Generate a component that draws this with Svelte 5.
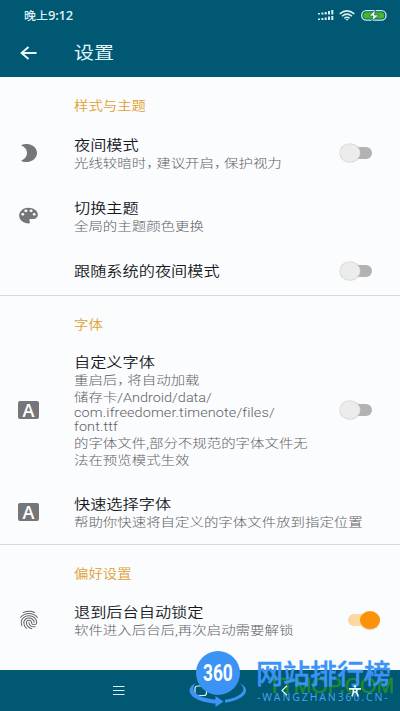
<script>
  let groups = $state([
    {
      title: "样式与主题",
      items: [
        { icon: "moon", title: "夜间模式", lines: ["光线较暗时，建议开启，保护视力"], on: false },
        { icon: "palette", title: "切换主题", lines: ["全局的主题颜色更换"] },
        { title: "跟随系统的夜间模式", lines: [], on: false },
      ],
    },
    {
      title: "字体",
      items: [
        {
          icon: "font",
          title: "自定义字体",
          lines: [
            "重启后，将自动加载",
            "储存卡/Android/data/",
            "com.ifreedomer.timenote/files/",
            "font.ttf",
            "的字体文件,部分不规范的字体文件无",
            "法在预览模式生效",
          ],
          on: false,
        },
        { icon: "font", title: "快速选择字体", lines: ["帮助你快速将自定义的字体文件放到指定位置"] },
      ],
    },
    {
      title: "偏好设置",
      items: [
        { icon: "finger", title: "退到后台自动锁定", lines: ["软件进入后台后,再次启动需要解锁"], on: true },
      ],
    },
  ]);

  const isLatin = (s) => /^[\x20-\x7e]+$/.test(s);
</script>

<div class="screen">
  <header>
    <div class="status">
      <span class="clock">晚上<span class="digits">9:12</span></span>
      <svg class="signal" width="16" height="11" viewBox="0 0 16 11" fill="#d5f3f5">
        <path d="M0 3h2v1.500H0zM3.400 2.500h2v2h-2zM6.700 2h2v2.500h-2zM10 1h2v3.500h-2zM13.300 0h2v4.500h-2zM0 8.500h2V10H0zM3.400 8h2v2h-2zM6.700 7.500h2V10h-2zM10 6.500h2V10h-2zM13.300 6h2v4h-2z" />
      </svg>
      <svg class="wifi" width="16" height="11" viewBox="0 0 16 11" fill="none" stroke="#d5f3f5" stroke-width="1.500">
        <path d="M.7 3.900Q8-2.200 15.300 3.900M3 6.200Q8 2 13 6.200M5.400 8.300Q8 6.200 10.600 8.300" />
        <path d="M6.500 9h3L8 10.700z" fill="#d5f3f5" stroke="none" />
      </svg>
      <svg class="battery" width="26" height="11" viewBox="0 0 26 11">
        <rect x=".7" y=".7" width="24.300" height="9.400" rx="4.700" fill="#075467" stroke="#c9eeee" stroke-width="1.300" />
        <rect x="2.300" y="2.200" width="21" height="6.400" rx="3.200" fill="#43b82f" />
        <path d="M14.500 0 8 6h4l-1.200 5L18 5h-4.500z" fill="#fff" stroke="#0b6251" stroke-width=".7" />
      </svg>
    </div>
    <div class="toolbar">
      <svg width="17" height="14" viewBox="0 0 17 14" fill="none" stroke="#e9fbfc" stroke-width="1.900">
        <path d="M16.500 7H1.500M8.500 1 1.600 7l6.900 6" />
      </svg>
      <h1>设置</h1>
    </div>
  </header>

  <main>
    {#each groups as group}
      <section>
        <h2>{group.title}</h2>
        {#each group.items as item}
          <div class="row" class:single={!item.lines.length}>
            <div class="icon">
              {#if item.icon === "moon"}
                <svg width="16" height="18" viewBox="0 0 16 18" fill="#757679">
                  <path d="M0 1.300C2-.1 5-.3 8 .3c4.700 1.100 8 4.500 8 8.600 0 4.200-3.300 7.700-8 8.800-3 .6-6 .4-8-1C4 15 6 12.300 6 9S4 3 0 1.300z" />
                </svg>
              {:else if item.icon === "palette"}
                <svg width="25" height="21" viewBox="0 0 24 24" preserveAspectRatio="none" fill="#757679">
                  <path d="M12 3c-4.970 0-9 4.030-9 9s4.030 9 9 9c.83 0 1.500-.67 1.500-1.500 0-.39-.15-.74-.39-1.010-.23-.26-.38-.61-.38-.99 0-.83.67-1.500 1.500-1.500H16c2.760 0 5-2.240 5-5 0-4.420-4.030-8-9-8zm-5.500 9c-.83 0-1.500-.67-1.500-1.500S5.670 9 6.500 9 8 9.670 8 10.500 7.330 12 6.500 12zm3-4C8.670 8 8 7.330 8 6.500S8.670 5 9.500 5s1.500.67 1.500 1.500S10.330 8 9.500 8zm5 0c-.83 0-1.500-.67-1.500-1.500S13.670 5 14.500 5s1.500.67 1.500 1.500S15.330 8 14.500 8zm3 4c-.83 0-1.500-.67-1.500-1.500S16.670 9 17.500 9s1.500.67 1.500 1.500-.67 1.500-1.500 1.500z" />
                </svg>
              {:else if item.icon === "font"}
                <span class="letter">A</span>
              {:else if item.icon === "finger"}
                <svg width="24" height="22" viewBox="0 0 24 24" preserveAspectRatio="none" fill="#5f6063">
                  <path d="M17.810 4.470c-.08 0-.16-.02-.23-.06C15.660 3.420 14 3 12.010 3c-1.980 0-3.860.47-5.570 1.410-.24.13-.54.04-.68-.2-.13-.24-.04-.55.2-.68C7.820 2.520 9.860 2 12.010 2c2.130 0 3.990.47 6.030 1.520.25.13.34.43.21.67-.09.18-.26.28-.44.28zM3.500 9.720c-.1 0-.2-.03-.29-.09-.23-.16-.28-.47-.12-.7.99-1.400 2.250-2.500 3.750-3.270C9.980 4.040 14 4.030 17.150 5.650c1.500.77 2.760 1.860 3.750 3.250.16.22.11.54-.12.7-.23.16-.54.11-.7-.12-.9-1.260-2.040-2.250-3.390-2.940-2.870-1.470-6.540-1.470-9.400.01-1.360.7-2.500 1.700-3.400 2.960-.08.14-.23.21-.39.21zm6.250 12.070c-.13 0-.26-.05-.35-.15-.87-.87-1.340-1.430-2.010-2.640-.69-1.230-1.050-2.730-1.050-4.340 0-2.970 2.540-5.390 5.660-5.390s5.660 2.420 5.660 5.390c0 .28-.22.5-.5.5s-.5-.22-.5-.5c0-2.420-2.090-4.390-4.660-4.390-2.570 0-4.660 1.970-4.660 4.390 0 1.440.32 2.770.93 3.850.64 1.150 1.080 1.640 1.850 2.420.19.2.19.51 0 .71-.11.1-.24.15-.37.15zm7.170-1.850c-1.190 0-2.240-.3-3.100-.89-1.490-1.010-2.380-2.650-2.380-4.390 0-.28.22-.5.5-.5s.5.22.5.5c0 1.410.72 2.740 1.940 3.560.71.48 1.540.71 2.540.71.24 0 .64-.03 1.040-.1.27-.05.53.13.58.41.05.27-.13.53-.41.58-.57.11-1.070.12-1.210.12zM14.910 22c-.04 0-.09-.01-.13-.02-1.590-.44-2.630-1.030-3.720-2.100-1.400-1.390-2.170-3.240-2.170-5.220 0-1.620 1.380-2.940 3.080-2.940 1.700 0 3.080 1.320 3.080 2.940 0 1.070.93 1.940 2.080 1.940s2.080-.87 2.080-1.940c0-3.770-3.250-6.830-7.250-6.830-2.840 0-5.440 1.580-6.610 4.030-.39.81-.59 1.760-.59 2.800 0 .78.07 2.010.67 3.610.1.26-.03.55-.29.64-.26.1-.55-.04-.64-.29-.49-1.310-.73-2.610-.73-3.960 0-1.200.23-2.290.68-3.240 1.330-2.790 4.280-4.600 7.510-4.600 4.550 0 8.250 3.510 8.250 7.830 0 1.620-1.380 2.940-3.080 2.940s-3.080-1.320-3.080-2.940c0-1.070-.93-1.940-2.080-1.940s-2.080.87-2.080 1.940c0 1.710.66 3.310 1.870 4.510.95.94 1.860 1.460 3.270 1.850.27.07.42.35.35.61-.05.23-.26.38-.47.38z" />
                </svg>
              {/if}
            </div>
            <div class="text">
              <p class="title">{item.title}</p>
              {#each item.lines as line}
                <p class="line" class:latin={isLatin(line)}>
                  {#each line.split("，") as part, i}{#if i}<span class="comma">，</span>{/if}{part}{/each}
                </p>
              {/each}
            </div>
            {#if item.on !== undefined}
              <button
                class="switch"
                class:on={item.on}
                role="switch"
                aria-checked={item.on}
                aria-label={item.title}
                onclick={() => (item.on = !item.on)}
              ></button>
            {/if}
          </div>
        {/each}
      </section>
    {/each}
  </main>

  <nav>
    <svg class="menu" width="12" height="11" viewBox="0 0 12 11" stroke="#d9f4f4" stroke-width="1.200">
      <path d="M0 1.500h11.500M0 5.500h11.500M0 9.500h11.500" />
    </svg>
    <svg class="home" width="14" height="12" viewBox="0 0 14 12" fill="none" stroke="#d9f4f4" stroke-width="1.200">
      <rect x="1" y="1" width="11.500" height="9.500" rx="2.500" />
    </svg>
    <svg class="back" width="7" height="11" viewBox="0 0 7 11" fill="none" stroke="#d9f4f4" stroke-width="1.200">
      <path d="M6 .8 1 5.500 6 10.200" />
    </svg>
    <svg class="person" width="14" height="12" viewBox="0 0 14 12" fill="none" stroke="#e6ffff" stroke-width="1.600">
      <circle cx="7" cy="1.500" r="1.300" fill="#e6ffff" stroke="none" />
      <path d="M1 3.900h12M5.300 4v3.500L4 11.500M8.700 4v3.500l1.300 4M5.500 7h3" />
    </svg>
  </nav>

  <div class="mark">
    <svg width="62" height="62" viewBox="0 0 62 62">
      <circle cx="30" cy="24" r="22" fill="#3b93f5" />
      <path d="M7.500 34C-2 39 0 47 12 51.500c5 1.900 10 2.700 15.500 2.900V58l8-5.500-8-5.500v3.600C18 50 7 46.500 5.500 41c-.6-2.500.5-4.800 2-7z" fill="#3b93f5" />
      <path d="M52 34c9 5 8 12-3 16.500-4 1.700-8 2.700-12 3.100v-2.800C46 49.500 54 46 55.300 41c.6-2.500-1.300-4.800-3.300-7z" fill="#3b93f5" />
    </svg>
    <b class="num">360</b>
    <span class="green">TTMOP.COM</span>
    <b class="name">网站排行榜</b>
    <span class="site">-WANGZHAN360.CN-</span>
  </div>
</div>

<style>
  :global(body) {
    margin: 0;
  }

  .screen {
    position: relative;
    width: 400px;
    height: 711px;
    display: flex;
    flex-direction: column;
    overflow: hidden;
    background: #fbfcfe;
    font-family: Roboto, "Noto Sans CJK SC", sans-serif;
  }

  h1, h2, p {
    margin: 0;
    font-weight: 400;
    white-space: nowrap;
  }

  header {
    height: 77px;
    background: #005872;
    flex: none;
  }

  .status {
    height: 30px;
    display: flex;
    align-items: center;
    padding: 0 13px 0 24px;
    box-sizing: border-box;
  }

  .clock {
    font-family: "Open Sans", "Noto Sans CJK SC", sans-serif;
    font-weight: 500;
    font-size: 12px;
    color: #d8f2f5;
    margin-right: auto;
    transform: scaleY(0.92);
  }

  .digits {
    font-size: 13px;
    font-weight: 600;
    letter-spacing: -0.2px;
  }

  .wifi {
    margin: 0 6px 0 5px;
  }

  .toolbar {
    display: flex;
    align-items: center;
    height: 46px;
    padding-left: 20px;
  }

  h1 {
    margin-left: 37px;
    font-size: 20px;
    line-height: 24px;
    color: #e0f5f8;
    transform: scaleY(0.85);
  }

  main {
    flex: 1;
    min-height: 0;
    overflow: hidden;
  }

  section + section {
    border-top: 1px solid #d5d7d9;
  }

  h2 {
    height: 31px;
    padding: 13px 0 0 74px;
    line-height: 34px;
    font-size: 14.4px;
    font-weight: 350;
    color: #dfa030;
    transform: scaleY(0.87);
    transform-origin: 0 29px;
  }

  section:first-child h2 {
    height: 32px;
  }

  .row {
    display: flex;
    align-items: center;
    min-height: 63px;
    box-sizing: border-box;
    padding: 13px 20px 13px 15px;
  }

  .row.single {
    min-height: 47px;
  }

  .icon {
    width: 27px;
    display: flex;
    justify-content: center;
    position: relative;
    top: -1px;
  }

  .letter {
    width: 21px;
    height: 18px;
    border-radius: 2px;
    background: #757679;
    color: #fff;
    font: 600 18px/18px "Open Sans", sans-serif;
    text-align: center;
  }

  .text {
    flex: 1;
    margin-left: 32px;
    position: relative;
    top: 0.7px;
  }

  .title {
    font-size: 16.2px;
    font-weight: 350;
    line-height: 18px;
    color: #17181b;
    transform: scaleY(0.85);
  }

  .line {
    font-size: 14.45px;
    font-weight: 300;
    line-height: 17px;
    height: 17px;
    color: #606164;
    transform: translateY(0.6px) scaleY(0.86);
  }

  .line.latin {
    height: 14.5px;
    line-height: 14.5px;
    letter-spacing: 0.12px;
  }

  .comma {
    margin-right: -4.4px;
  }

  .switch {
    position: relative;
    top: -1px;
    width: 40px;
    height: 20px;
    padding: 0;
    border: none;
    background: none;
    cursor: pointer;
  }

  .switch::before {
    content: "";
    position: absolute;
    left: 8px;
    top: 4px;
    width: 24px;
    height: 12px;
    border-radius: 6px;
    background: #b2b2b3;
  }

  .switch::after {
    content: "";
    position: absolute;
    left: 0;
    top: 1px;
    width: 20px;
    height: 18px;
    border-radius: 50%;
    background: #ececec;
    box-shadow: 0 0 1px 0.5px #c8c8c8;
  }

  .switch.on::before {
    background: #fcd8a0;
  }

  .switch.on::after {
    left: 20px;
    background: #fb9208;
    box-shadow: 0 1px 1px #e3c8a0;
  }

  nav {
    flex: none;
    height: 41px;
    display: flex;
    align-items: center;
    padding-left: 113px;
    background: #005872;
  }

  .home {
    margin-left: 69px;
  }

  .back {
    margin-left: 73px;
  }

  .person {
    margin-left: 60px;
  }

  .back,
  .person {
    position: relative;
    z-index: 2;
  }

  /* site stamp laid over the navigation bar */
  .mark {
    position: absolute;
    left: 188px;
    top: 649px;
    width: 212px;
    height: 62px;
    pointer-events: none;
    white-space: nowrap;
  }

  .mark > * {
    position: absolute;
    left: 0;
    top: 0;
    transform-origin: 0 0;
  }

  .mark .num {
    left: 15px;
    top: 12px;
    font: 700 24px/24px Roboto, sans-serif;
    color: #fff;
    transform: scaleX(0.72);
  }

  .mark .green {
    left: 80px;
    top: 25px;
    font: 400 21.5px/24px "Liberation Sans", sans-serif;
    color: #1f8a2c;
    -webkit-text-stroke: 0.6px #1f8a2c;
    transform: scaleX(0.98);
  }

  .mark .name {
    left: 68px;
    top: 8px;
    font: 500 27px/32px "Noto Sans CJK SC", sans-serif;
    color: #3b93f5;
    -webkit-text-stroke: 0.4px #3b93f5;
  }

  .mark .site {
    left: 69px;
    top: 41px;
    font: 400 10.5px/14px "Open Sans", sans-serif;
    letter-spacing: 1.9px;
    color: #4ba3ee;
  }
</style>
